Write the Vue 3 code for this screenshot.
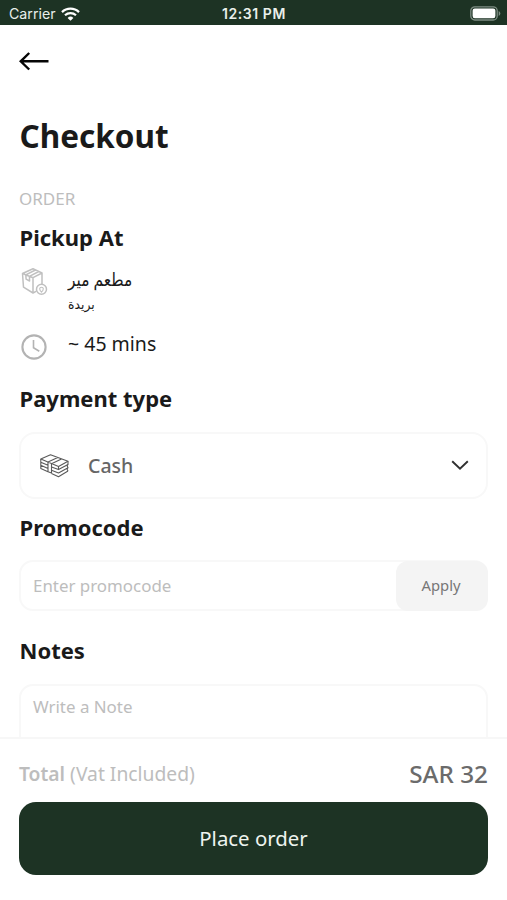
<script setup>
const title = 'Checkout'
const order = { place: 'مطعم مير', city: 'بريدة', eta: '~ 45 mins', total: 'SAR 32' }
</script>

<template>
  <div class="screen">
    <header class="status">
      <div class="carrier">
        <span>Carrier</span>
        <svg width="19" height="14" viewBox="0 0 19 14" fill="none" stroke="#fff">
          <path d="M1 5.100a12.200 12.200 0 0 1 17 0" stroke-width="2.300" />
          <path d="M4 8.300a8 8 0 0 1 11 0" stroke-width="2.200" />
          <path d="M9.500 13.800 6.600 10.900a4.200 4.200 0 0 1 5.800 0z" fill="#fff" stroke="none" />
        </svg>
      </div>
      <span class="time">12:31 PM</span>
      <div class="power">
        <svg width="31" height="15" viewBox="0 0 31 15">
          <rect x="0.8" y="0.8" width="26.4" height="13.2" rx="4" fill="none" stroke="#7e8d83" stroke-width="1.3" />
          <rect x="2.6" y="2.6" width="22.8" height="9.6" rx="2.2" fill="#fff" />
          <path d="M28.700 5v5q1.600-.7 1.600-2.500T28.700 5z" fill="#7e8d83" />
        </svg>
      </div>
    </header>

    <main class="content">
      <button class="back" aria-label="Back">
        <svg width="30" height="20" viewBox="0 0 30 20" fill="none" stroke="#050505" stroke-width="2.4">
          <path d="M29.500 10.300H1.800M10.200 2 1.700 10.300l8.500 8.200" />
        </svg>
      </button>

      <h1>{{ title }}</h1>
      <p class="eyebrow">ORDER</p>
      <h2 class="pickup-title">Pickup At</h2>

      <div class="place">
        <svg class="box-icon" width="27" height="28" viewBox="0 0 27 28" fill="none" stroke="#c0c0c0" stroke-width="1.5" stroke-linejoin="round">
          <path d="M1.500 5.500 12 .8l9 4.200-9 4.700zM1.500 5.500l1 13.700 9.500 5.800V9.700M21 5v11M12 25l3.500-1.800M4.800 6.900l9.600-4.900M8.400 8.300l9.400-4.800M4.800 6.900l.3 4.300 3.500 1.800-.2-4.700" />
          <circle cx="20.500" cy="21.300" r="5" fill="#fff" />
          <path d="M20.500 24.200c-2.700-2.900-2.100-5 0-5s2.700 2.100 0 5z" stroke-width="1.100" />
        </svg>
        <div class="place-text">
          <span class="place-name" lang="ar">{{ order.place }}</span>
          <span class="place-city" lang="ar">{{ order.city }}</span>
        </div>
      </div>

      <div class="eta">
        <svg width="26" height="26" viewBox="0 0 26 26" fill="none" stroke="#b3b3b3">
          <circle cx="13" cy="13" r="11.600" stroke-width="2.100" />
          <path d="M12.500 6v7.800l5.800 3.400" stroke-width="1.600" />
        </svg>
        <span>{{ order.eta }}</span>
      </div>

      <h2 class="payment-title">Payment type</h2>
      <div class="select">
        <svg width="29" height="24" viewBox="0 0 29 24" fill="none" stroke="#5a5a5a" stroke-width="1.1" stroke-linejoin="round">
          <path d="M.8 5 10.500 .8 28 7.300l-9.500 5.200zM8 8l9.800-4.500M11.500 9.800l10-4.800" />
          <path d="M.8 5v9.500L8 17.700V8M.8 8.200 8 11.300M.8 11.300 8 14.500M8 17.700l3.500 1.300V9.800" />
          <path d="M11.500 12.900l7 2.700 9.500-5.200M11.500 16.200l7 2.700 9.500-5.200M11.500 19.400l7 3.400L28 17" />
          <path d="M28 7.300v3.100l-1 1.200 1 2.100-1 1.200 1 2.100M18.500 12.500v3.100" />
        </svg>
        <span>Cash</span>
        <svg class="chevron" width="18" height="11" viewBox="0 0 18 11" fill="none" stroke="#303030" stroke-width="1.900">
          <path d="m1.200 1.300 7.800 7.500 7.800-7.500" />
        </svg>
      </div>

      <h2 class="promo-title">Promocode</h2>
      <div class="promo">
        <span class="placeholder">Enter promocode</span>
        <button class="apply">Apply</button>
      </div>

      <h2 class="notes-title">Notes</h2>
      <div class="note"><span class="placeholder">Write a Note</span></div>
    </main>

    <footer class="footer">
      <div class="total">
        <span class="total-label"><b>Total</b> (Vat Included)</span>
        <span class="total-value">{{ order.total }}</span>
      </div>
      <button class="submit">Place order</button>
    </footer>
  </div>
</template>

<style>
body {
  background: #fff;
}
</style>

<style scoped>
* {
  box-sizing: border-box;
}
.screen {
  display: flex;
  flex-direction: column;
  width: 507px;
  height: 900px;
  overflow: hidden;
  background: #fff;
  color: #1a1a1a;
  font-family: 'Noto Sans', 'DejaVu Sans', sans-serif;
  white-space: nowrap;
}
svg {
  display: block;
  flex: none;
}
button {
  padding: 0;
  border: 0;
  background: none;
  font: inherit;
}
h1,
h2,
p {
  margin: 0;
}
.status {
  display: grid;
  grid-template-columns: 1fr auto 1fr;
  align-items: center;
  flex: none;
  height: 25px;
  padding: 2px 6px 0 9px;
  background: #1d3324;
  color: #e9efeb;
  font: 14.2px/22px Inter, sans-serif;
}
.carrier {
  display: flex;
  align-items: center;
  gap: 5px;
}
.time {
  padding-right: 2px;
  font-weight: 600;
  font-size: 14px;
  letter-spacing: 0.55px;
}
.power {
  display: flex;
  justify-content: flex-end;
}
.content {
  display: flex;
  flex-direction: column;
  flex: 1;
  min-height: 0;
  padding: 26px 19px 0;
  overflow: hidden;
}
.content > * {
  flex: none;
}
.back {
  align-self: flex-start;
  height: 20px;
}
h1 {
  margin-top: 45px;
  padding-left: 0.5px;
  font-size: 31.5px;
  line-height: 40px;
}
.eyebrow {
  margin-top: 33px;
  color: #bdbdbd;
  font-size: 17px;
  line-height: 20px;
}
h2 {
  padding-left: 0.5px;
  font-size: 22px;
  line-height: 28px;
}
.pickup-title {
  margin-top: 14px;
}
.place {
  display: flex;
  gap: 20px;
  height: 50px;
  margin-top: 16px;
  padding-left: 2px;
}
.box-icon {
  margin-top: 1px;
}
.place-text {
  display: flex;
  flex-direction: column;
  align-items: flex-start;
}
.place-name {
  font-size: 18px;
  line-height: 25px;
  transform: scaleX(0.86);
  transform-origin: left;
}
.place-city {
  font-size: 13px;
  line-height: 25px;
  transform: scaleX(0.95);
  transform-origin: left;
}
.eta {
  display: flex;
  gap: 21px;
  height: 27px;
  margin-top: 17px;
  padding-left: 2px;
  font-size: 19.5px;
  line-height: 20px;
}
.payment-title {
  margin-top: 23px;
}
.select {
  display: flex;
  align-items: center;
  height: 67px;
  margin-top: 20px;
  padding: 0 17px 0 19px;
  border: 2px solid #f8f8f8;
  border-radius: 16px;
  color: #666;
  font-size: 19.5px;
  font-weight: 500;
}
.select span {
  margin-left: 19px;
}
.chevron {
  margin-left: auto;
}
.promo-title {
  margin-top: 14px;
}
.promo {
  display: flex;
  align-items: center;
  justify-content: space-between;
  height: 51px;
  margin-top: 19px;
  padding-left: 12px;
  border: 2px solid #f8f8f8;
  border-radius: 14px;
}
.placeholder {
  color: #bdbdbd;
  font-size: 16.9px;
  line-height: 20px;
}
.apply {
  width: 92px;
  height: 50px;
  margin-right: -2px;
  padding: 0 2px 2px 0;
  border-radius: 12px;
  background: #f4f4f4;
  color: #777;
  font-size: 14.8px;
}
.notes-title {
  margin-top: 25px;
}
.note {
  display: flex;
  align-items: flex-start;
  height: 120px;
  margin-top: 20px;
  padding: 11px 12px;
  border: 2px solid #f8f8f8;
  border-radius: 14px;
}
.footer {
  display: flex;
  flex-direction: column;
  flex: none;
  height: 163px;
  padding: 0 19px;
  border-top: 2px solid #f7f7f7;
}
.total {
  display: flex;
  align-items: center;
  justify-content: space-between;
  height: 63px;
  padding-top: 6px;
}
.total-label {
  color: #bdbdbd;
  font-size: 19.3px;
}
.total-label b {
  font-weight: 600;
}
.total-value {
  color: #6b6b6b;
  font-size: 24.3px;
  font-weight: 500;
}
.submit {
  height: 73px;
  padding-bottom: 2px;
  border-radius: 17px;
  background: #1d3324;
  color: #eef4ef;
  font-size: 20.4px;
}
</style>
